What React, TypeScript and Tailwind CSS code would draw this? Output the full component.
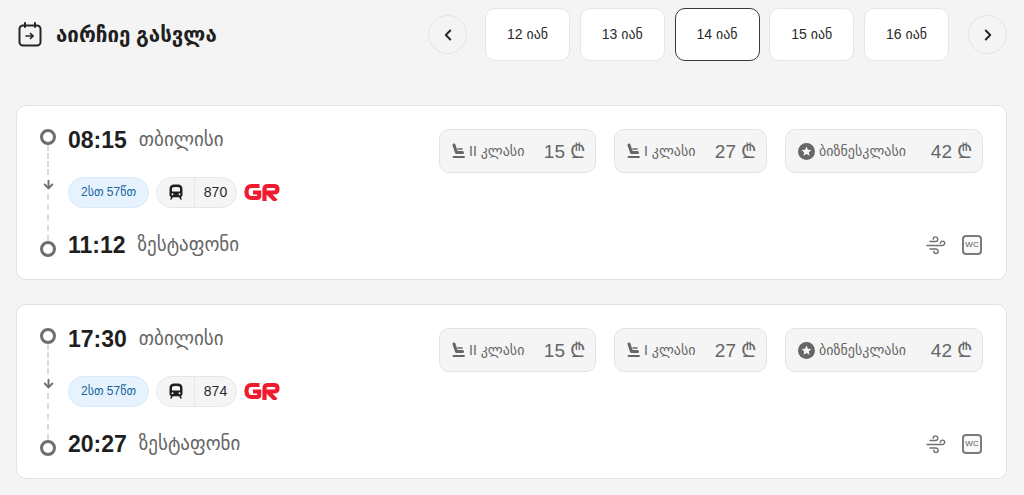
import { ChevronLeft, ChevronRight, ArrowDown } from "lucide-react";

const FONT = "font-['Liberation_Sans','DejaVu_Sans',sans-serif]";

const days = ["12 იან", "13 იან", "14 იან", "15 იან", "16 იან"];

function CalendarIcon() {
  return (
    <svg width="24" height="25" viewBox="0 0 24 25" fill="none" stroke="#262626" strokeWidth="2" strokeLinecap="round" strokeLinejoin="round">
      <rect x="1.5" y="3.5" width="21" height="20" rx="3.5" />
      <path d="M7 1v4M17 1v4" />
      <path d="M8 14h7M12.5 11.5l2.7 2.5-2.7 2.5" strokeWidth="1.7" />
    </svg>
  );
}

function SeatIcon() {
  return (
    <svg width="13" height="16" viewBox="0 0 13 16" fill="none" stroke="#666666" strokeLinecap="round" strokeLinejoin="round">
      <path d="M2 2l2.500 7.500H10.500" strokeWidth="3" />
      <path d="M6 6h4" strokeWidth="1.600" />
      <path d="M1.500 14h10.500" strokeWidth="1.800" />
    </svg>
  );
}

function StarBadge() {
  return (
    <svg width="17" height="17" viewBox="0 0 17 17">
      <circle cx="8.500" cy="8.500" r="8.500" fill="#666666" />
      <path d="M8.500 3.600l1.450 3.100 3.350.4-2.500 2.300.7 3.350-3-1.700-3 1.700.7-3.350-2.500-2.300 3.350-.4z" fill="#f5f5f5" />
    </svg>
  );
}

function BusIcon() {
  return (
    <svg width="14" height="16" viewBox="0 0 14 16" fill="#1f1f1f">
      <path d="M5 .5h4c2.800 0 4.500 1.700 4.500 4.500v5.500c0 1.300-.7 2.200-1.700 2.600l1.200 2.400h-1.700l-1.200-2.200H3.900l-1.200 2.200H1l1.200-2.400C1.200 12.700.5 11.800.5 10.500V5C.5 2.200 2.200.5 5 .5z" />
      <path d="M3 3.800c1-.6 2.500-.9 4-.9s3 .3 4 .9v3.700H3z" fill="#f5f5f5" />
      <circle cx="3.500" cy="10.300" r="1" fill="#f5f5f5" />
      <circle cx="10.500" cy="10.300" r="1" fill="#f5f5f5" />
    </svg>
  );
}

function GrLogo() {
  return (
    <svg width="36" height="18" viewBox="0 0 36 18" fill="none" stroke="#ee1c2e" strokeWidth="4.200">
      <path d="M15.500 3H7.500C4.500 3 2.500 5 2.500 8.500v1C2.500 13 4.500 15 7.500 15H13c1.500 0 2.200-.8 2.200-2.200V9.500H9" />
      <path d="M20.500 18V6.500C20.500 4 21.500 3 24 3h6c2.200 0 3.500 1.100 3.500 3.200S32.200 9.500 30 9.500h-6.500L32 18" />
    </svg>
  );
}

function WindIcon() {
  return (
    <svg width="20" height="19" viewBox="0 0 20 19" fill="none" stroke="#707070" strokeWidth="1.400" strokeLinecap="round">
      <path d="M4 5.500h5.500a2.300 2.300 0 1 0-2.300-2.300" />
      <path d="M1 9.500h15.500a2.200 2.200 0 1 0-2.200-2.200" />
      <path d="M4 13h6a2.200 2.200 0 1 1-2.200 2.200" />
    </svg>
  );
}

function Wc() {
  return (
    <div className="flex h-[20px] w-[20px] items-center justify-center rounded-[4px] border-2 border-[#7a7a7a] bg-[#fafafa] font-['Liberation_Sans',sans-serif] text-[8px] leading-none text-[#555555]">
      WC
    </div>
  );
}

function Fare({ icon, label, price, width }: { icon: React.ReactNode; label: string; price: number; width: string }) {
  return (
    <div className={`flex h-[44px] items-center justify-between rounded-[10px] border border-[#e4e4e4] bg-[#f5f5f5] pl-[12px] pr-[10px] text-[#666666] ${width}`}>
      <div className="flex items-center gap-[4px]">
        {icon}
        <span className="text-[14px]">{label}</span>
      </div>
      <div className="flex items-center gap-[5px]">
        <span className="text-[19px] leading-none">{price}</span>
        <span className="text-[20px] leading-none">₾</span>
      </div>
    </div>
  );
}

function Trip({ dep, arr, bus }: { dep: string; arr: string; bus: string }) {
  return (
    <div className="flex h-[175px] justify-between rounded-[10px] border border-[#e2e2e2] bg-white pl-[22px] pr-[23px] pt-[23px]">
      <div className="flex">
        <div className="flex w-[18px] flex-col items-center">
          <div className="h-[16px] w-[16px] shrink-0 rounded-full border-[3px] border-[#6e6e6e]" />
          <div className="h-[30px] border-l-2 border-dashed border-[#dcdcdc]" />
          <ArrowDown size={13} strokeWidth={3.500} className="my-[3px] shrink-0 text-[#6e6e6e]" />
          <div className="h-[47px] border-l-2 border-dashed border-[#dcdcdc]" />
          <div className="h-[16px] w-[16px] shrink-0 rounded-full border-[3px] border-[#6e6e6e]" />
        </div>
        <div className="ml-[11px] flex flex-col">
          <div className="-mt-[1px] flex h-[24px] items-center gap-[12px]">
            <span className="text-[23px] font-bold leading-none text-[#1f1f1f]">{dep}</span>
            <span className="text-[19px] text-[#666666]">თბილისი</span>
          </div>
          <div className="mt-[24px] flex h-[32px] items-center gap-[7px]">
            <div className="flex h-[31px] w-[81px] items-center justify-center rounded-full border border-[#d4e9fa] bg-[#e6f3fe] text-[12px] text-[#17659f]">
              2სთ 57წთ
            </div>
            <div className="flex h-[31px] w-[81px] items-center rounded-full border border-[#e6e6e6] bg-[#f5f5f5]">
              <div className="flex h-full w-[38px] items-center justify-center border-r border-[#e6e6e6]">
                <BusIcon />
              </div>
              <span className="flex-1 text-center text-[14px] text-[#2a2a2a]">{bus}</span>
            </div>
            <GrLogo />
          </div>
          <div className="mt-[25px] flex h-[24px] items-center gap-[12px]">
            <span className="text-[23px] font-bold leading-none text-[#1f1f1f]">{arr}</span>
            <span className="text-[19px] text-[#666666]">ზესტაფონი</span>
          </div>
        </div>
      </div>
      <div className="flex w-[544px] flex-col justify-between pb-[24px]">
        <div className="flex justify-between">
          <Fare icon={<SeatIcon />} label="II კლასი" price={15} width="w-[157px]" />
          <Fare icon={<SeatIcon />} label="I კლასი" price={27} width="w-[153px]" />
          <Fare icon={<StarBadge />} label="ბიზნესკლასი" price={42} width="w-[198px]" />
        </div>
        <div className="flex items-center justify-end gap-[16px] pr-[1px]">
          <WindIcon />
          <Wc />
        </div>
      </div>
    </div>
  );
}

export default function App() {
  return (
    <div className={`h-[495px] overflow-hidden bg-[#f4f4f4] pl-[16px] pr-[17px] pt-[8px] ${FONT}`}>
      {/* Header */}
      <div className="flex h-[53px] items-center justify-between">
        <div className="flex items-center gap-[14px] pl-[2px]">
          <CalendarIcon />
          <h1 className="pt-[2px] text-[20.500px] font-bold text-[#1f1f1f]">აირჩიე გასვლა</h1>
        </div>
        <div className="flex items-center">
          <button className="flex h-[39px] w-[39px] items-center justify-center rounded-full border border-[#e4e4e4]">
            <ChevronLeft size={18} strokeWidth={2.500} className="text-[#262626]" />
          </button>
          <div className="ml-[18px] mr-[19px] flex gap-[9.750px]">
            {days.map((d) => (
              <div
                key={d}
                className={`flex h-[53px] w-[85px] items-center justify-center rounded-[10px] border bg-white text-[14px] text-[#2a2a2a] ${
                  d === "14 იან" ? "border-[#3a3a3a]" : "border-[#e6e6e6]"
                }`}
              >
                {d}
              </div>
            ))}
          </div>
          <button className="flex h-[39px] w-[39px] items-center justify-center rounded-full border border-[#e4e4e4]">
            <ChevronRight size={18} strokeWidth={2.500} className="text-[#262626]" />
          </button>
        </div>
      </div>

      {/* Trips */}
      <div className="mt-[44px] flex flex-col gap-[24px]">
        <Trip dep="08:15" arr="11:12" bus="870" />
        <Trip dep="17:30" arr="20:27" bus="874" />
      </div>
    </div>
  );
}
